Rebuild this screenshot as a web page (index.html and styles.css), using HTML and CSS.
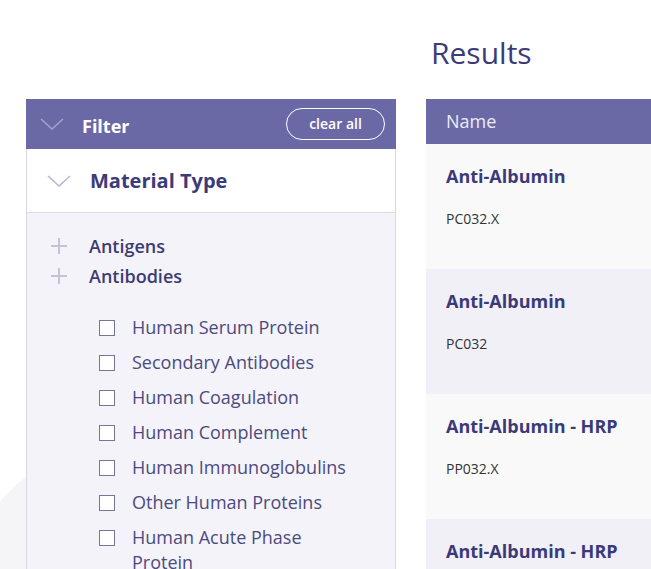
FILE: index.html
```html
<!DOCTYPE html>
<html lang="en">
<head>
    <meta charset="UTF-8">
    <meta name="viewport" content="width=device-width, initial-scale=1.0">
    <title>Results</title>
    <link rel="stylesheet" href="styles.css">
</head>
<body>
    <div class="page">
        <aside class="filter">
            <div class="filter-head">
                <svg class="chevron chevron-light" width="24" height="12" viewBox="0 0 24 12"><path d="M1 1 L12 11 L23 1" fill="none" stroke="currentColor" stroke-width="1.6"/></svg>
                <span class="filter-title">Filter</span>
                <button class="clear-btn">clear all</button>
            </div>

            <div class="group">
                <div class="group-head">
                    <svg class="chevron" width="24" height="12" viewBox="0 0 24 12"><path d="M1 1 L12 11 L23 1" fill="none" stroke="currentColor" stroke-width="1.6"/></svg>
                    <span>Material Type</span>
                </div>
                <div class="group-body">
                    <ul class="tree">
                        <li><span class="plus"></span>Antigens</li>
                        <li><span class="plus"></span>Antibodies</li>
                    </ul>
                    <ul class="checks">
                        <li><label><span class="box"></span><span>Human Serum Protein</span></label></li>
                        <li><label><span class="box"></span><span>Secondary Antibodies</span></label></li>
                        <li><label><span class="box"></span><span>Human Coagulation</span></label></li>
                        <li><label><span class="box"></span><span>Human Complement</span></label></li>
                        <li><label><span class="box"></span><span>Human Immunoglobulins</span></label></li>
                        <li><label><span class="box"></span><span>Other Human Proteins</span></label></li>
                        <li><label><span class="box"></span><span>Human Acute Phase Protein</span></label></li>
                    </ul>
                </div>
            </div>
        </aside>

        <main class="results">
            <h1>Results</h1>
            <div class="table">
                <div class="table-head">Name</div>
                <div class="row"><h2>Anti-Albumin</h2><p>PC032.X</p></div>
                <div class="row"><h2>Anti-Albumin</h2><p>PC032</p></div>
                <div class="row"><h2>Anti-Albumin - HRP</h2><p>PP032.X</p></div>
                <div class="row"><h2>Anti-Albumin - HRP</h2><p>PP032</p></div>
            </div>
        </main>
    </div>
</body>
</html>
```

FILE: styles.css
```css
body {
    font-family: 'Open Sans', 'Liberation Sans', sans-serif;
    background: #fff;
    margin: 0;
    padding: 0;
    height: 569px;
    overflow: hidden;
    position: relative;
}

/* faint decorative blob behind the filter panel */
body::before {
    content: '';
    position: absolute;
    left: -35px;
    top: 445px;
    width: 310px;
    height: 310px;
    border-radius: 50%;
    background: #f5f5f8;
    z-index: 0;
}

.page {
    position: relative;
    z-index: 1;
    display: grid;
    grid-template-columns: 370px 1fr;
    column-gap: 30px;
    padding-left: 26px;
}

.filter {
    margin-top: 99px;
}

.filter-head {
    height: 50px;
    background-color: #6b69a5;
    display: flex;
    align-items: center;
    padding: 0 11px 0 14px;
    color: #fff;
}

.chevron {
    color: #b7b6cd;
    flex-shrink: 0;
}

.chevron-light {
    color: #a3a1cb;
}

.filter-title {
    font-size: 18px;
    font-weight: 700;
    margin-left: 18px;
    margin-top: 4px;
}

.clear-btn {
    margin-left: auto;
    width: 99px;
    height: 32px;
    border: 1px solid #fff;
    border-radius: 16px;
    background: transparent;
    color: #fff;
    font-family: inherit;
    font-size: 14px;
    font-weight: 600;
    padding: 0 0 2px;
    cursor: pointer;
}

.group {
    border-left: 1px solid #d8d8e2;
    border-right: 1px solid #d8d8e2;
}

.group-head {
    height: 63px;
    background: #fff;
    border-bottom: 1px solid #dcdce6;
    display: flex;
    align-items: center;
    padding-left: 20px;
    font-size: 20px;
    font-weight: 700;
    color: #3c3b7a;
}

.group-head span {
    margin-left: 19px;
}

.group-body {
    background: #f3f3f9;
    padding: 18px 40px 40px 24px;
}

.tree,
.checks {
    list-style: none;
    margin: 0;
    padding: 0;
}

.tree li {
    display: flex;
    align-items: center;
    line-height: 30px;
    font-size: 18px;
    font-weight: 600;
    color: #3d3c72;
}

.plus {
    position: relative;
    width: 16px;
    height: 16px;
    margin-right: 22px;
    flex-shrink: 0;
}

.plus::before,
.plus::after {
    content: '';
    position: absolute;
    background: #c4c3d6;
}

.plus::before {
    left: 0;
    right: 0;
    top: 7px;
    height: 2px;
}

.plus::after {
    top: 0;
    bottom: 0;
    left: 7px;
    width: 2px;
}

.checks {
    margin: 24px 0 0 48px;
}

.checks li {
    margin-bottom: 10px;
}

.checks label {
    display: flex;
    align-items: flex-start;
    gap: 17px;
    font-size: 18px;
    line-height: 25px;
    color: #4c4b7d;
}

.box {
    width: 16px;
    height: 16px;
    box-sizing: border-box;
    border: 1.5px solid #76759a;
    background: #fff;
    margin-top: 5px;
    flex-shrink: 0;
}

.results h1 {
    margin: 33px 0 26px 5px;
    font-size: 30px;
    font-weight: 400;
    line-height: 40px;
    color: #3c3b78;
}

.table-head {
    height: 45px;
    line-height: 45px;
    background-color: #6b69a5;
    color: #ecebf7;
    font-size: 18px;
    padding-left: 20px;
}

.row {
    height: 125px;
    box-sizing: border-box;
    padding: 20px 20px 0;
    background: #f9f9f9;
}

.row:nth-child(odd) {
    background: #f0f0f6;
}

.row h2 {
    margin: 0;
    font-size: 18px;
    font-weight: 700;
    line-height: 25px;
    color: #3b3a79;
}

.row p {
    margin: 20px 0 0;
    font-size: 14px;
    line-height: 19px;
    color: #333;
}
```
